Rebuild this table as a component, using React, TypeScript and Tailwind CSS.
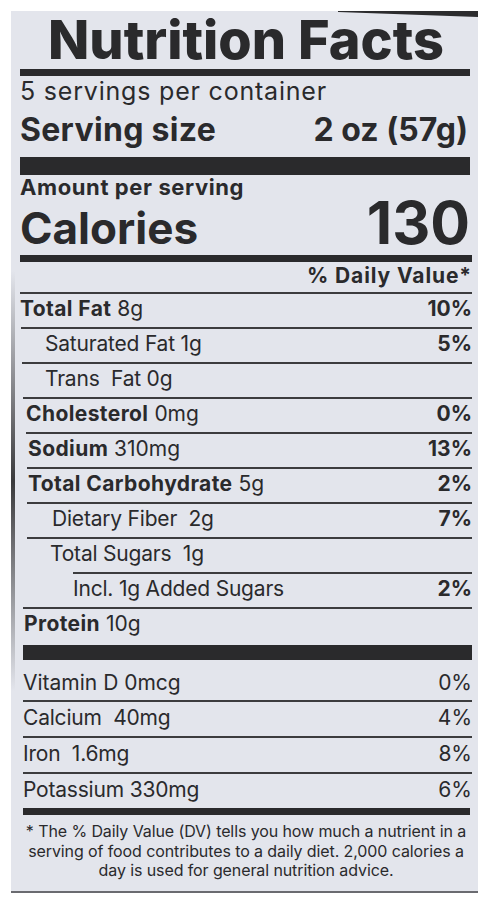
const rows = [
  { label: "Total Fat", amount: " 8g", dv: "10%", bold: true, dvBold: true, wrap: "ml-0", pad: "pl-0" },
  { label: "Saturated Fat 1g", amount: "", dv: "5%", bold: false, dvBold: true, wrap: "ml-[1px]", pad: "pl-[24px]" },
  { label: "Trans  Fat 0g", amount: "", dv: "", bold: false, dvBold: false, wrap: "ml-[2px]", pad: "pl-[23px]" },
  { label: "Cholesterol", amount: " 0mg", dv: "0%", bold: true, dvBold: true, wrap: "ml-[3px]", pad: "pl-[3px]" },
  { label: "Sodium", amount: " 310mg", dv: "13%", bold: true, dvBold: true, wrap: "ml-[6px]", pad: "pl-[2px]" },
  { label: "Total Carbohydrate", amount: " 5g", dv: "2%", bold: true, dvBold: true, wrap: "ml-[7px]", pad: "pl-[1px]" },
  { label: "Dietary Fiber  2g", amount: "", dv: "7%", bold: false, dvBold: true, wrap: "ml-[7px]", pad: "pl-[25px]" },
  { label: "Total Sugars  1g", amount: "", dv: "", bold: false, dvBold: false, wrap: "ml-[7px]", pad: "pl-[23px]" },
  { label: "Incl. 1g Added Sugars", amount: "", dv: "2%", bold: false, dvBold: true, wrap: "ml-[53px]", pad: "pl-0" },
]

const minerals = [
  { label: "Calcium  40mg", dv: "4%" },
  { label: "Iron  1.6mg", dv: "8%" },
  { label: "Potassium 330mg", dv: "6%" },
]

export default function App() {
  return (
    <div className="min-h-[905px] bg-white pt-[11px] pl-[11px] font-[family-name:Inter,'DejaVu_Sans',sans-serif] text-[#2a2a2c]">
      <div className="relative w-[467px] h-[882px] bg-[#e3e5ec] border-b-2 border-[#6a6b70] pl-[9px] pr-[6px] flex flex-col">
        {/* shading from the photo edges */}
        <svg className="absolute top-0 right-0" width="140" height="7" viewBox="0 0 140 7">
          <polygon points="0,0 140,0 140,6 0,1" fill="#2c2c2e" />
        </svg>
        <div className="absolute left-0 top-[260px] w-[4px] h-[420px] bg-linear-to-b from-transparent via-[#3a3a3c] to-transparent" />

        <h1 className="pt-[2px] text-[54px] leading-none font-extrabold text-center">
          Nutrition Facts
        </h1>
        <div className="mt-[2px] h-[7px] mr-[2px] bg-[#2a2a2c]" />

        <div className="mt-[3px] text-[25px] leading-none tracking-[0.8px]">5 servings per container</div>
        <div className="mt-[10px] flex justify-between items-baseline font-bold text-[32px] leading-none">
          <span className="tracking-[0.3px]">Serving size</span>
          <span className="mr-[4px]">2 oz (57g)</span>
        </div>
        <div className="mt-[11px] h-[18px] mr-[2px] bg-[#2a2a2c]" />

        <div className="mt-[1px] text-[22px] leading-none font-bold tracking-[0.6px]">Amount per serving</div>
        <div className="mt-[2px] flex justify-between items-baseline font-bold">
          <span className="text-[44px] leading-none">Calories</span>
          <span className="text-[59px] leading-[45px] mr-[2px]">130</span>
        </div>
        <div className="mt-[5px] h-[7px] bg-[#2a2a2c]" />

        <div className="mt-[3px] text-[21px] leading-none font-bold text-right tracking-[0.9px]">% Daily Value*</div>

        <div className="mt-[6px] flex flex-col">
          {rows.map((row) => (
            <div
              key={row.label}
              className={`${row.wrap} h-[35px] border-t-2 border-[#3c3c3e] pt-[4px] flex justify-between items-baseline text-[21px] leading-none`}
            >
              <span className={`${row.pad} whitespace-pre`}>
                <span className={row.bold ? "font-bold tracking-[0.4px]" : "font-normal tracking-[-0.2px]"}>{row.label}</span>
                {row.amount}
              </span>
              <span className={row.dvBold ? "font-bold" : "font-normal"}>{row.dv}</span>
            </div>
          ))}
          <div className="ml-[3px] h-[38px] border-t-2 border-[#3c3c3e] pt-[4px] text-[21px] leading-none pl-[1px]">
            <span className="font-bold tracking-[0.4px]">Protein</span> 10g
          </div>
        </div>

        <div className="ml-[3px] h-[15px] bg-[#2a2a2c]" />

        <div className="ml-[3px] h-[40px] pt-[12px] flex justify-between items-baseline text-[21px] leading-none">
          <span>Vitamin D 0mcg</span>
          <span>0%</span>
        </div>
        {minerals.map((m) => (
          <div
            key={m.label}
            className="ml-[3px] h-[36px] border-t-2 border-[#3c3c3e] pt-[5px] flex justify-between items-baseline text-[21px] leading-none"
          >
            <span className="whitespace-pre tracking-[-0.2px]">{m.label}</span>
            <span>{m.dv}</span>
          </div>
        ))}
        <div className="ml-[3px] mr-[2px] h-[7px] bg-[#2a2a2c]" />

        <p className="pt-[7px] text-[16px] leading-[19.5px] text-center whitespace-nowrap tracking-[-0.1px]">
          * The % Daily Value (DV) tells you how much a nutrient in a
          <br />
          serving of food contributes to a daily diet. 2,000 calories a
          <br />
          day is used for general nutrition advice.
        </p>
      </div>
    </div>
  )
}
